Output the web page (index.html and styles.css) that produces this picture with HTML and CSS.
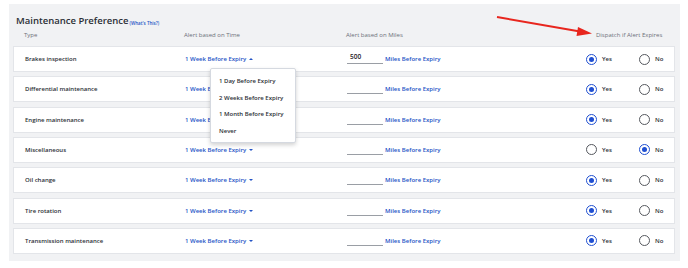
FILE: index.html
```html
<!DOCTYPE html>
<html lang="en">
<head>
    <meta charset="UTF-8">
    <title>Maintenance Preference</title>
    <link rel="stylesheet" href="styles.css">
</head>
<body>
    <div class="panel">
        <h2 class="title">Maintenance Preference<a class="whats-this" href="#">(What's This?)</a></h2>
        <div class="grid head">
            <span>Type</span>
            <span>Alert based on Time</span>
            <span>Alert based on Miles</span>
            <span class="dispatch">Dispatch if Alert Expires</span>
        </div>

        <div class="grid card">
            <span class="name">Brakes inspection</span>
            <span class="time">1 Week Before Expiry <i class="caret up"></i></span>
            <span class="miles"><span class="miles-input">500</span><span class="miles-label">Miles Before Expiry</span></span>
            <span class="opt"><i class="radio on"></i>Yes</span>
            <span class="opt"><i class="radio"></i>No</span>
            <div class="menu">
                <div>1 Day Before Expiry</div>
                <div>2 Weeks Before Expiry</div>
                <div>1 Month Before Expiry</div>
                <div>Never</div>
            </div>
        </div>
        <div class="grid card">
            <span class="name">Differential maintenance</span>
            <span class="time">1 Week Before Expiry <i class="caret"></i></span>
            <span class="miles"><span class="miles-input"></span><span class="miles-label">Miles Before Expiry</span></span>
            <span class="opt"><i class="radio on"></i>Yes</span>
            <span class="opt"><i class="radio"></i>No</span>
        </div>
        <div class="grid card">
            <span class="name">Engine maintenance</span>
            <span class="time">1 Week Before Expiry <i class="caret"></i></span>
            <span class="miles"><span class="miles-input"></span><span class="miles-label">Miles Before Expiry</span></span>
            <span class="opt"><i class="radio on"></i>Yes</span>
            <span class="opt"><i class="radio"></i>No</span>
        </div>
        <div class="grid card">
            <span class="name">Miscellaneous</span>
            <span class="time">1 Week Before Expiry <i class="caret"></i></span>
            <span class="miles"><span class="miles-input"></span><span class="miles-label">Miles Before Expiry</span></span>
            <span class="opt"><i class="radio"></i>Yes</span>
            <span class="opt"><i class="radio on"></i>No</span>
        </div>
        <div class="grid card">
            <span class="name">Oil change</span>
            <span class="time">1 Week Before Expiry <i class="caret"></i></span>
            <span class="miles"><span class="miles-input"></span><span class="miles-label">Miles Before Expiry</span></span>
            <span class="opt"><i class="radio on"></i>Yes</span>
            <span class="opt"><i class="radio"></i>No</span>
        </div>
        <div class="grid card">
            <span class="name">Tire rotation</span>
            <span class="time">1 Week Before Expiry <i class="caret"></i></span>
            <span class="miles"><span class="miles-input"></span><span class="miles-label">Miles Before Expiry</span></span>
            <span class="opt"><i class="radio on"></i>Yes</span>
            <span class="opt"><i class="radio"></i>No</span>
        </div>
        <div class="grid card">
            <span class="name">Transmission maintenance</span>
            <span class="time">1 Week Before Expiry <i class="caret"></i></span>
            <span class="miles"><span class="miles-input"></span><span class="miles-label">Miles Before Expiry</span></span>
            <span class="opt"><i class="radio on"></i>Yes</span>
            <span class="opt"><i class="radio"></i>No</span>
        </div>
    </div>

    <svg class="arrow" width="688" height="268" viewBox="0 0 688 268">
        <line x1="497" y1="17" x2="580" y2="31.5" stroke="#e8261e" stroke-width="2"/>
        <polygon points="592,33.5 578,27 576.5,36" fill="#e8261e"/>
    </svg>
</body>
</html>
```

FILE: styles.css
```css
body {
    margin: 0;
    background: #fff;
    font-family: "Open Sans", Arial, sans-serif;
    color: #2b2f36;
}
.panel {
    margin: 4px 8px 0 9px;
    padding: 9px 5px 7px 4px;
    background: #f1f2f4;
}
.title {
    margin: 0 0 0 3px;
    height: 16px;
    font-size: 9.5px;
    font-weight: 600;
    line-height: 16px;
    color: #2b2f36;
}
.whats-this {
    font-size: 4.5px;
    color: #2454c6;
    text-decoration: none;
    margin-left: 1px;
    vertical-align: top;
    line-height: 20px;
}
.grid {
    display: grid;
    grid-template-columns: 160px 162px 239px 53px 1fr;
    align-items: center;
    padding-left: 11px;
}
.head {
    font-size: 6px;
    line-height: 8px;
    color: #6c7079;
    height: 17px;
    box-sizing: border-box;
    padding-bottom: 5px;
}
.head .dispatch {
    grid-column: 4 / span 2;
    padding-left: 11px;
}
.card {
    position: relative;
    height: 26px;
    margin-bottom: 4.33px;
    background: #fff;
    border: 1px solid #e3e5e9;
    box-sizing: border-box;
    font-size: 6px;
    font-weight: 600;
}
.card:last-child {
    margin-bottom: 0;
}
.time {
    color: #2454c6;
}
.caret {
    display: inline-block;
    width: 0;
    height: 0;
    margin-left: 1px;
    vertical-align: 1px;
    border-left: 2.5px solid transparent;
    border-right: 2.5px solid transparent;
    border-top: 2.5px solid #2454c6;
}
.caret.up {
    border-top: 0;
    border-bottom: 2.5px solid #2454c6;
}
.miles {
    display: flex;
    align-items: center;
}
.miles-input {
    width: 36px;
    height: 13px;
    box-sizing: border-box;
    padding: 1px 3px 0;
    border-bottom: 1px solid #9a9ea5;
    margin-right: 2px;
    font-size: 6.5px;
    color: #1d2026;
    line-height: 10px;
    align-self: flex-end;
    margin-bottom: 3px;
}
.miles-label {
    color: #2454c6;
}
.opt {
    display: flex;
    align-items: center;
    gap: 5px;
}
.radio {
    width: 11px;
    height: 11px;
    box-sizing: border-box;
    border: 1.3px solid #55585e;
    border-radius: 50%;
    display: flex;
    align-items: center;
    justify-content: center;
}
.radio.on {
    border-color: #1f4fd1;
}
.radio.on::after {
    content: "";
    width: 5px;
    height: 5px;
    border-radius: 50%;
    background: #1f4fd1;
}
.menu {
    position: absolute;
    left: 196px;
    top: 21px;
    z-index: 2;
    width: 84px;
    padding: 4px 0 3px;
    background: #fff;
    border: 1px solid #d5d9e0;
    border-radius: 2px;
    box-shadow: 0 2px 4px rgba(0, 0, 0, 0.18);
    font-size: 6px;
    font-weight: 600;
    color: #2b2f36;
    white-space: nowrap;
}
.menu div {
    padding: 0 8px;
    line-height: 16.5px;
}
.arrow {
    position: absolute;
    left: 0;
    top: 0;
    pointer-events: none;
}
```
